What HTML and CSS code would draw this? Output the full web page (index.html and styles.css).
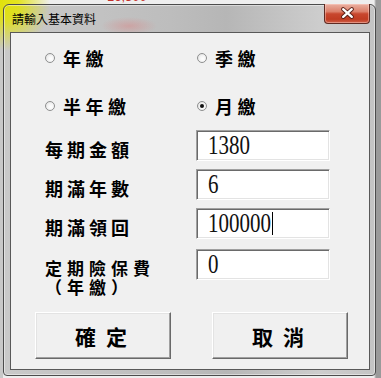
FILE: index.html
```html
<!DOCTYPE html>
<html lang="zh-Hant">
<head>
<meta charset="utf-8">
<link rel="stylesheet" href="styles.css">
</head>
<body>
<div class="desk">
  <div class="topstrip"><span class="cellval">16,300</span></div>
  <div class="window">
    <div class="titlebar">
      <span class="title">請輸入基本資料</span>
      <div class="close">
        <svg width="46" height="20" viewBox="0 0 46 20">
          <path d="M19 5 L28 13 M28 5 L19 13" stroke="#5a2018" stroke-width="4.4" stroke-linecap="round" fill="none"/>
          <path d="M19 5 L28 13 M28 5 L19 13" stroke="#ffffff" stroke-width="2.4" stroke-linecap="round" fill="none"/>
        </svg>
      </div>
    </div>
    <div class="client">
      <div class="radios">
        <div class="radio"><span class="dot"></span><span class="rtext">年繳</span></div>
        <div class="radio"><span class="dot"></span><span class="rtext">季繳</span></div>
        <div class="radio"><span class="dot"></span><span class="rtext">半年繳</span></div>
        <div class="radio"><span class="dot checked"></span><span class="rtext">月繳</span></div>
      </div>
      <div class="form">
        <div class="lbl">每期金額</div>
        <div class="field"><span class="num">1380</span></div>
        <div class="lbl">期滿年數</div>
        <div class="field"><span class="num">6</span></div>
        <div class="lbl">期滿領回</div>
        <div class="field"><span class="num">100000</span><span class="caret"></span></div>
        <div class="lbl last"><span class="ln">定期險保費</span><span class="ln">（年繳）</span></div>
        <div class="field last"><span class="num">0</span></div>
      </div>
      <div class="buttons">
        <div class="btn">確定</div>
        <div class="btn">取消</div>
      </div>
    </div>
  </div>
</div>
</body>
</html>
```
FILE: styles.css
```css
html, body {
  margin: 0;
  padding: 0;
}
body {
  width: 381px;
  height: 378px;
  overflow: hidden;
  font-family: "Noto Sans CJK TC", "Noto Sans", sans-serif;
}
.desk {
  width: 381px;
  height: 378px;
  background:
    radial-gradient(circle at 0 0, rgba(226,226,10,1) 0, rgba(226,226,10,0.9) 18px, rgba(226,226,10,0) 50px),
    linear-gradient(to right, #c8c8c8 0, #c8c8c8 3px, #eeeeee 3px, #eeeeee 374px, #9a9a9a 376px);
}
.topstrip {
  height: 4px;
  overflow: hidden;
  padding-left: 107px;
}
.cellval {
  display: block;
  margin-top: -11px;
  font: 13px/16px "Liberation Sans", sans-serif;
  color: #c4302a;
}
.window {
  box-sizing: border-box;
  margin-left: 3px;
  width: 373px;
  height: 372px;
  border: 1px solid #4c4c4c;
  border-radius: 6px 6px 4px 4px;
  padding: 0 5px 0 6px;
  box-shadow: inset 0 0 0 1px rgba(255,255,255,0.45);
  background:
    radial-gradient(circle at 0 0, rgba(226,226,10,1) 0, rgba(226,226,10,0.85) 16px, rgba(226,226,10,0) 46px),
    radial-gradient(ellipse 28px 9px at 125px 21px, rgba(214,140,140,0.55), rgba(214,140,140,0)),
    linear-gradient(to right, #c9c9c9 0, #bdbdbd 45%, #b6b6b6 60%, #cdcdcd 85%, #c4c4c4 100%);
}
.titlebar {
  height: 27px;
  display: flex;
  justify-content: space-between;
  align-items: flex-start;
  padding-left: 2px;
}
.title {
  font-size: 12px;
  line-height: 27px;
  color: #000;
}
.close {
  width: 46px;
  height: 20px;
  box-sizing: border-box;
  margin-top: -1px;
  border: 1px solid #5e2a22;
  border-top: none;
  border-radius: 0 0 4px 4px;
  background: linear-gradient(#eab0a2 0%, #dc806a 40%, #c8472e 52%, #c03c22 80%, #d0604a 100%);
  box-shadow: inset 0 0 0 1px rgba(255,210,200,0.45);
  display: flex;
  align-items: center;
  justify-content: center;
}
.close svg {
  display: block;
}
.client {
  box-sizing: border-box;
  height: 338px;
  border: 1px solid #585858;
  background: #f0f0f0;
  padding: 16px 0 0 24px;
}
.radios {
  display: grid;
  grid-template-columns: 152px auto;
  grid-auto-rows: 18px;
  row-gap: 30px;
  padding-left: 10px;
}
.radio {
  display: flex;
  align-items: center;
  gap: 8px;
}
.dot {
  box-sizing: border-box;
  width: 10px;
  height: 10px;
  border-radius: 50%;
  border: 1px solid #8e8f8f;
  background: radial-gradient(circle at 60% 60%, #ffffff 0, #f4f4f4 45%, #d6d6d6 100%);
  display: flex;
  align-items: center;
  justify-content: center;
}
.dot.checked::after {
  content: "";
  width: 4px;
  height: 4px;
  border-radius: 50%;
  background: #111;
}
.rtext, .lbl {
  font-size: 18px;
  font-weight: 700;
  letter-spacing: 4.5px;
  line-height: 18px;
  color: #000;
}
.form {
  margin-top: 15px;
  padding-left: 10px;
  display: grid;
  grid-template-columns: 151px 134px;
  row-gap: 8px;
}
.lbl {
  line-height: 19px;
  padding-top: 10px;
  letter-spacing: 4px;
}
.lbl.last, .field.last {
  margin-top: 2px;
}
.lbl.last {
  padding-top: 9px;
  font-size: 17px;
  letter-spacing: 5px;
  display: flex;
  flex-direction: column;
}
.ln {
  display: block;
  height: 19px;
  line-height: 19px;
}
.field {
  box-sizing: border-box;
  height: 31px;
  background: #fff;
  border-top: 1px solid #a0a0a0;
  border-left: 1px solid #a0a0a0;
  border-bottom: 1px solid #ffffff;
  border-right: 1px solid #ffffff;
  box-shadow: inset 1px 1px 0 #6a6a6a, inset -1px -1px 0 #e3e3e3;
  display: flex;
  align-items: center;
  padding-left: 11px;
}
.num {
  display: inline-block;
  font-family: "Liberation Serif", serif;
  font-size: 21px;
  line-height: 21px;
  color: #111;
  transform: scaleY(1.3);
}
.caret {
  display: inline-block;
  width: 1px;
  height: 23px;
  background: #000;
  margin-left: 1px;
}
.buttons {
  margin-top: 16px;
  display: flex;
  gap: 41px;
}
.btn {
  box-sizing: border-box;
  width: 136px;
  height: 47px;
  background: #f0f0f0;
  border-top: 1px solid #ffffff;
  border-left: 1px solid #ffffff;
  border-bottom: 1px solid #696969;
  border-right: 1px solid #696969;
  box-shadow: inset -1px -1px 0 #a0a0a0, inset 1px 1px 0 #e3e3e3;
  display: flex;
  align-items: center;
  justify-content: center;
  padding-left: 6px;
  font-size: 21px;
  font-weight: 700;
  letter-spacing: 10px;
  color: #000;
}
```
